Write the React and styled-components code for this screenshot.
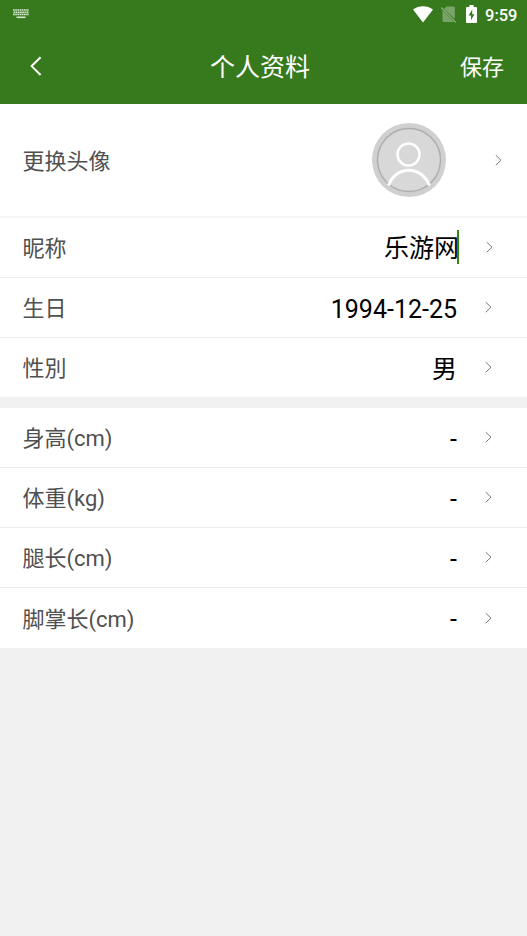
import React from "react";
import styled, { createGlobalStyle } from "styled-components";

const GlobalStyle = createGlobalStyle`
* {
box-sizing: border-box;
}
body {
margin: 0;
background: #f1f1f1;
font-family: Roboto, "Noto Sans CJK SC", sans-serif;
}
`
const Page = styled.div`
min-height: 936px;
background: #f1f1f1;
`
const Header = styled.header`
height: 104px;
background: #37791d;
color: #ffffff;
`
const StatusBar = styled.div`
display: flex;
align-items: center;
height: 28px;
padding: 0 9px 0 13px;
`
const StatusIcons = styled.div`
display: flex;
align-items: center;
margin-left: auto;
`
const WifiIcon = styled.svg`
margin-right: 8px;
`
const SimIcon = styled.svg`
margin-right: 10px;
`
const BatteryIcon = styled.svg`
margin-right: 8px;
`
const Time = styled.span`
width: 33px;
font-size: 16.5px;
font-weight: 500;
line-height: 26px;
white-space: nowrap;
padding-top: 3px;
`
const NavBar = styled.nav`
display: grid;
grid-template-columns: 100px 1fr 100px;
align-items: center;
height: 76px;
`
const BackButton = styled.button`
display: flex;
border: 0;
background: none;
color: inherit;
padding: 0 0 0 30px;
`
const Title = styled.h1`
margin: 0 0 0 -7px;
padding-top: 4px;
font-size: 25px;
font-weight: 400;
line-height: 36px;
text-align: center;
`
const SaveButton = styled.button`
border: 0;
background: none;
color: inherit;
padding: 4px 23px 0 0;
font-family: inherit;
font-size: 22px;
line-height: 32px;
text-align: right;
`
const Group = styled.section`
margin-bottom: 11px;
background: #ffffff;
`
const Row = styled.div`
display: flex;
align-items: center;
height: ${props => props.$height || 60}px;
padding: 0 ${props => props.$right || 35}px 0 22.5px;
border-bottom: ${props => props.$line === undefined ? 1 : props.$line}px solid ${props => props.$line === 2 ? "#f6f6f6" : "#eeeeee"};
`
const Label = styled.span`
flex: 1;
color: #505050;
font-size: 22px;
line-height: 32px;
padding-top: ${props => props.$drop || 2}px;
`
const Value = styled.span`
color: #000000;
font-size: 25px;
line-height: 34px;
padding-top: 4px;
margin-right: 27px;
`
const NameValue = styled(Value)`
display: flex;
height: 35px;
padding-top: 0;
margin-right: 26px;
`
const NameText = styled.span`
padding-top: 2px;
`
const Cursor = styled.i`
width: 2px;
height: 34px;
margin-left: -2px;
background: #37850f;
`
const Avatar = styled.svg`
margin-right: 47px;
`
const ChevronIcon = styled.svg`
margin-bottom: 1px;
`

const Chevron = () => (
    <ChevronIcon width="8" height="12" viewBox="0 0 8 12" fill="none" stroke="#555555" strokeWidth="0.8">
        <path d="M1.8 1.2 7 6.2 1.8 11.2" />
    </ChevronIcon>
)

const Keyboard = () => (
    <svg width="16" height="10" viewBox="0 0 16 10" fill="none" stroke="#d8e6d3">
        <path d="M0 1H16" strokeWidth="1.7" strokeDasharray="1.7 .5" />
        <path d="M.5 3.3H16" strokeWidth="1.7" strokeDasharray="1.7 .5" />
        <path d="M0 5.5H16" strokeWidth="1.5" strokeDasharray="1.7 .5" />
        <path d="M3.5 8.3H12.5" strokeWidth="1.6" />
    </svg>
)

const people = [
    { id: "birthday", label: "生日", value: "1994-12-25" },
    { id: "gender", label: "性別", value: "男" },
]

const sizes = [
    { id: "height", label: "身高(cm)" },
    { id: "weight", label: "体重(kg)" },
    { id: "leg", label: "腿长(cm)" },
    { id: "foot", label: "脚掌长(cm)" },
]

const App = () => {
    return (
        <Page lang="zh-CN">
            <GlobalStyle />
            <Header>
                <StatusBar>
                    <Keyboard />
                    <StatusIcons>
                        <WifiIcon width="20" height="17" viewBox="0 0 20 17">
                            <path d="M0 3.6C5.5-.9 14.5-.9 20 3.6L10 16.4Z" fill="#ffffff" />
                        </WifiIcon>
                        <SimIcon width="15" height="17" viewBox="0 0 15 17">
                            <path d="M5.5.5H12.5Q13.8.5 13.8 1.8V13L2.8 3ZM1.5 4.2 12.8 16H3Q1.5 16 1.5 14.5Z" fill="#78a467" />
                            <path d="M.3 1.5 14.7 16.5" stroke="#84ac74" strokeWidth="1.4" />
                        </SimIcon>
                        <BatteryIcon width="11" height="18" viewBox="0 0 11 18">
                            <path d="M3.4 0H7.6V2H10Q11 2 11 3V17Q11 18 10 18H1Q0 18 0 17V3Q0 2 1 2H3.4Z" fill="#ffffff" />
                            <path d="M6.2 4.6 2.6 10.6H5V15.2L8.4 9.2H6.2Z" fill="#37791d" />
                        </BatteryIcon>
                        <Time>9:59</Time>
                    </StatusIcons>
                </StatusBar>
                <NavBar>
                    <BackButton aria-label="返回">
                        <svg width="12" height="20" viewBox="0 0 12 20" fill="none" stroke="currentColor" strokeWidth="2">
                            <path d="M10.6 1.2 1.6 10.1 10.6 19" />
                        </svg>
                    </BackButton>
                    <Title>个人资料</Title>
                    <SaveButton>保存</SaveButton>
                </NavBar>
            </Header>

            <Group>
                <Row $height={114} $line={2} $right={25}>
                    <Label $drop={3}>更换头像</Label>
                    <Avatar width="76" height="76" viewBox="-1 0 76 76" fill="none">
                        <circle cx="37" cy="38" r="37" fill="#d0d0d0" />
                        <circle cx="37" cy="38" r="31.5" fill="#d8d8d8" stroke="#aeaeae" strokeWidth="1.5" />
                        <circle cx="36.5" cy="32.5" r="11" stroke="#ffffff" strokeWidth="2.5" />
                        <path d="M16.5 63.5C24 43 49.5 43 57.5 63.5" stroke="#ffffff" strokeWidth="3" />
                    </Avatar>
                    <Chevron />
                </Row>
                <Row $right={34}>
                    <Label>昵称</Label>
                    <NameValue><NameText>乐游网</NameText><Cursor /></NameValue>
                    <Chevron />
                </Row>
                {people.map((item, i) => (
                    <Row key={item.id} $line={i === 1 ? 0 : 1} $height={i === 1 ? 59 : 60}>
                        <Label $drop={3}>{item.label}</Label>
                        <Value>{item.value}</Value>
                        <Chevron />
                    </Row>
                ))}
            </Group>

            <Group>
                {sizes.map((item, i) => (
                    <Row key={item.id} $line={i === 3 ? 0 : 1}>
                        <Label $drop={3}>{item.label}</Label>
                        <Value>-</Value>
                        <Chevron />
                    </Row>
                ))}
            </Group>
        </Page>
    )
}

export default App;
